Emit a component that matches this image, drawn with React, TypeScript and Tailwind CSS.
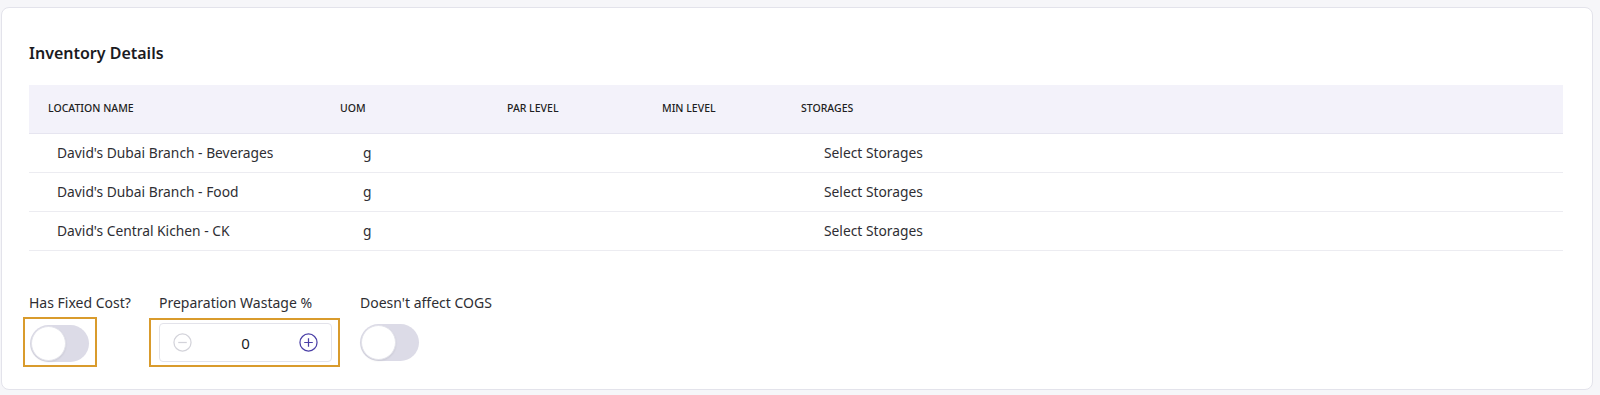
import React from "react";

const font = { fontFamily: '"Noto Sans", "Open Sans", sans-serif' };

function Toggle() {
  return (
    <div className="relative h-[37px] w-[59px] rounded-full bg-[#dcdbe7]">
      <div className="absolute left-[1px] top-[1px] h-[35px] w-[35px] rounded-full border border-[#e2e2ea] bg-white shadow-[0_1px_2px_rgba(0,0,0,0.08)]" />
    </div>
  );
}

const rows = [
  "David's Dubai Branch - Beverages",
  "David's Dubai Branch - Food",
  "David's Central Kichen - CK",
];

export default function App() {
  return (
    <div
      className="h-[395px] w-[1600px] bg-[#f6f6f9] pl-[1px] pr-[7px] pt-[7px] pb-[5px]"
      style={font}
    >
      <div className="flex h-full flex-col rounded-[8px] border border-[#e3e3eb] bg-white pl-[27px] pr-[29px] pt-[35px]">
        <h2 className="text-[16px] font-semibold leading-[20px] text-[#1b1b1f]">
          Inventory Details
        </h2>
        <div className="mt-[22px]">
          <div className="grid h-[49px] grid-cols-[307px_152px_156px_152px_1fr] items-center border-b border-[#e6e5f0] bg-[#f3f2fa] text-[10.5px] font-medium uppercase text-[#1e1e22]">
            <div className="pl-[19px]">Location Name</div>
            <div className="pl-[4px]">UOM</div>
            <div className="pl-[19px]">Par Level</div>
            <div className="pl-[18px]">Min Level</div>
            <div className="pl-[5px]">Storages</div>
          </div>
          {rows.map((r) => (
            <div
              key={r}
              className="grid h-[39px] grid-cols-[307px_152px_156px_152px_1fr] items-center border-b border-[#ececf1] text-[13.8px] text-[#2e2e33]"
            >
              <div className="pl-[28px]">{r}</div>
              <div className="pl-[27px]">g</div>
              <div />
              <div />
              <div className="pl-[28px]">Select Storages</div>
            </div>
          ))}
        </div>
        <div className="mt-[42px] flex text-[14px] leading-[20px] text-[#2e2e33]">
          <div className="w-[130px]">
            <div>Has Fixed Cost?</div>
            <div className="relative ml-[1px] mt-[12px] w-[59px]">
              <Toggle />
              <div className="pointer-events-none absolute -left-[7px] -right-[8px] -top-[8px] -bottom-[5px] border-[2.5px] border-[#d99b2c]" />
            </div>
          </div>
          <div className="w-[201px]">
            <div>Preparation Wastage %</div>
            <div className="relative mt-[10px] flex h-[39px] w-[173px] items-center justify-between rounded-[4px] border border-[#e3e3ea] bg-white px-[13px]">
              <svg width="19" height="19" viewBox="0 0 20 20" fill="none">
                <circle cx="10" cy="10" r="9" stroke="#d3d3da" strokeWidth="1.3" />
                <path d="M5.5 10h9" stroke="#d3d3da" strokeWidth="1.3" />
              </svg>
              <span className="text-[15px] text-[#1b1b1f]">0</span>
              <svg width="19" height="19" viewBox="0 0 20 20" fill="none">
                <circle cx="10" cy="10" r="9" stroke="#4a3fa6" strokeWidth="1.3" />
                <path d="M5.5 10h9M10 5.5v9" stroke="#4a3fa6" strokeWidth="1.3" />
              </svg>
              <div className="pointer-events-none absolute -left-[11px] -right-[9px] -top-[6px] -bottom-[6px] border-[2.5px] border-[#d99b2c]" />
            </div>
          </div>
          <div>
            <div>Doesn't affect COGS</div>
            <div className="mt-[11px]">
              <Toggle />
            </div>
          </div>
        </div>
      </div>
    </div>
  );
}
